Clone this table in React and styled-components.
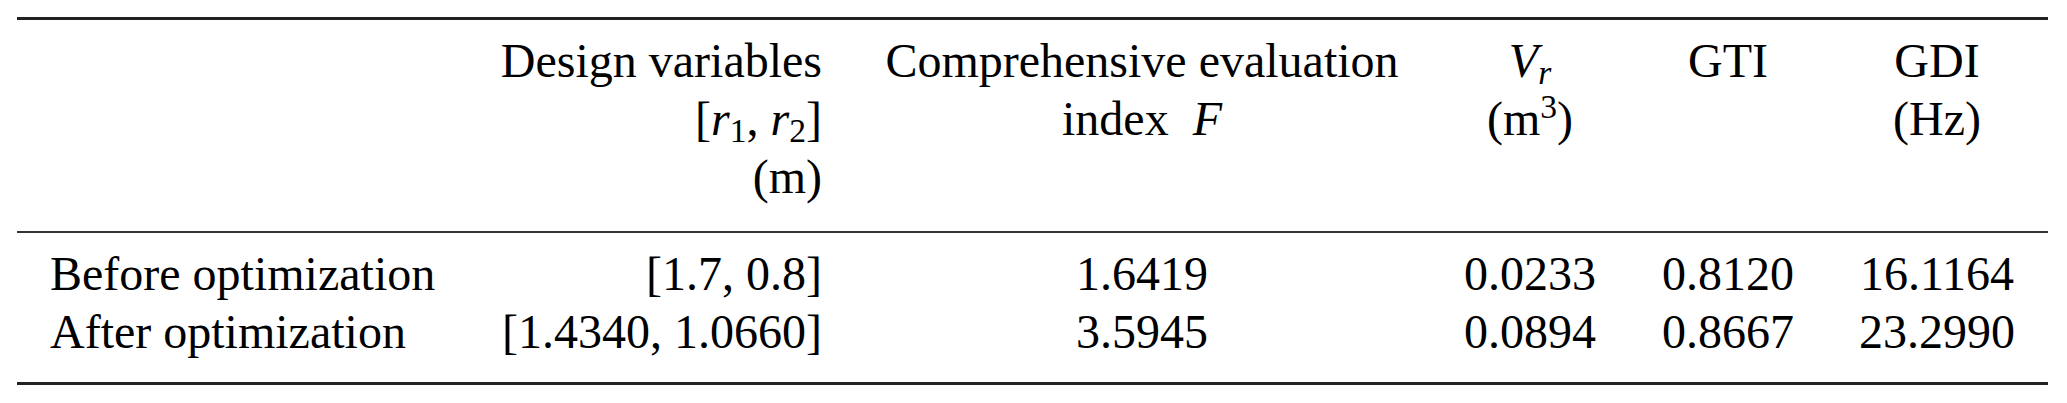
import React from 'react'
import styled, {createGlobalStyle} from 'styled-components'

const rows = [
    {label: 'Before optimization', vars: '[1.7, 0.8]', f: '1.6419', vr: '0.0233', gti: '0.8120', gdi: '16.1164'},
    {label: 'After optimization', vars: '[1.4340, 1.0660]', f: '3.5945', vr: '0.0894', gti: '0.8667', gdi: '23.2990'},
]

const widths = [433, 404, 576, 200, 196, 222]

export default function App() {
    return (
        <>
            <GlobalStyle/>
            <Page>
                <Table>
                    <colgroup>
                        {widths.map((w, i) => <Col key={i} $w={w}/>)}
                    </colgroup>
                    <thead>
                        <tr>
                            <HeadCell $align="left"/>
                            <HeadCell $align="right" $padRight={32}>
                                Design variables<br/>
                                [<I>r</I><Sub>1</Sub>, <I>r</I><Sub>2</Sub>]<br/>
                                (m)
                            </HeadCell>
                            <HeadCell>
                                Comprehensive evaluation<br/>
                                index&nbsp; <I>F</I>
                            </HeadCell>
                            <HeadCell>
                                <I>V</I><Sub><I>r</I></Sub><br/>
                                (m<Sup>3</Sup>)
                            </HeadCell>
                            <HeadCell>GTI</HeadCell>
                            <HeadCell>
                                GDI<br/>
                                (Hz)
                            </HeadCell>
                        </tr>
                    </thead>
                    <tbody>
                        {rows.map((r, i) => {
                            const first = i === 0
                            const last = i === rows.length - 1
                            return (
                                <tr key={r.label}>
                                    <Cell $align="left" $padLeft={33} $first={first} $last={last}>{r.label}</Cell>
                                    <Cell $align="right" $padRight={32} $first={first} $last={last}>{r.vars}</Cell>
                                    <Cell $first={first} $last={last}>{r.f}</Cell>
                                    <Cell $first={first} $last={last}>{r.vr}</Cell>
                                    <Cell $first={first} $last={last}>{r.gti}</Cell>
                                    <Cell $first={first} $last={last}>{r.gdi}</Cell>
                                </tr>
                            )
                        })}
                    </tbody>
                </Table>
            </Page>
        </>
    )
}

const GlobalStyle = createGlobalStyle`
    html, body {
        margin: 0;
        padding: 0;
        background: #ffffff;
    }
    body {
        font-family: "Liberation Serif", "Times New Roman", serif;
        color: #000;
    }
`

const Page = styled.div`
    padding: 17px 0 0 17px;
    font-family: "Liberation Serif", "Times New Roman", serif;
`

const Table = styled.table`
    width: 2031px;
    table-layout: fixed;
    border-collapse: separate;
    border-spacing: 0;
    font-family: "Liberation Serif", "Times New Roman", serif;
    font-size: 48px;
    line-height: 58px;
    color: #000;
`

const Col = styled.col`
    width: ${p => p.$w}px;
`

const HeadCell = styled.th`
    font-family: "Liberation Serif", "Times New Roman", serif;
    font-weight: normal;
    vertical-align: top;
    text-align: ${p => p.$align || 'center'};
    padding: 12px ${p => p.$padRight || 0}px 25px 0;
    border-top: 3px solid #222;
    border-bottom: 2px solid #333;
    white-space: nowrap;
`

const Cell = styled.td`
    font-family: "Liberation Serif", "Times New Roman", serif;
    text-align: ${p => p.$align || 'center'};
    padding: ${p => (p.$first ? 12 : 0)}px ${p => p.$padRight || 0}px ${p => (p.$last ? 21 : 0)}px ${p => p.$padLeft || 0}px;
    border-bottom: ${p => (p.$last ? '3px solid #222' : 'none')};
    white-space: nowrap;
`

const I = styled.i`
    font-style: italic;
`

const Sub = styled.sub`
    font-size: 0.7em;
    line-height: 0;
    vertical-align: -0.22em;
`

const Sup = styled.sup`
    font-size: 0.7em;
    line-height: 0;
    vertical-align: 0.5em;
`
